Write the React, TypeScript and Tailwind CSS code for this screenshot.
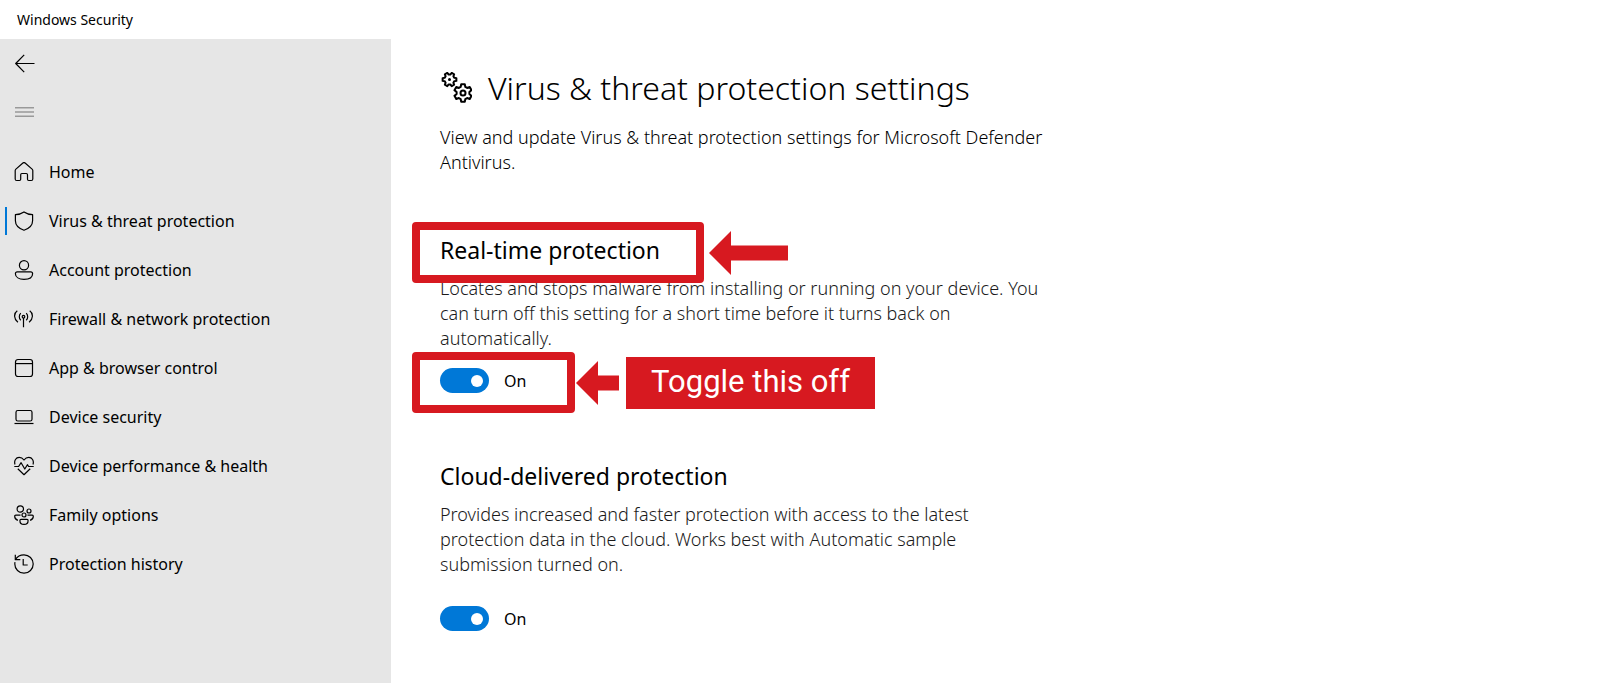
import { useState, type ReactNode } from "react"

const Icon = ({ children }: { children: ReactNode }) => (
    <svg className="size-5 shrink-0" viewBox="0 0 20 20" fill="none" stroke="currentColor" strokeWidth="1.2" strokeLinejoin="round" aria-hidden="true">
        {children}
    </svg>
)

const navItems = [
    {
        label: "Home",
        icon: <path d="M1.2 8.6c0-.6.2-1 .7-1.5l7-6.1c.7-.6 1.5-.6 2.2 0l7 6.1c.5.5.7.9.7 1.5v8.400c0 .9-.6 1.5-1.5 1.5h-2.600c-.7 0-1.2-.5-1.2-1.2v-4.600c0-.7-.5-1.2-1.2-1.2H7.900c-.7 0-1.2.5-1.2 1.2v4.600c0 .7-.5 1.2-1.2 1.2H2.700c-.9 0-1.5-.6-1.5-1.5z" />,
    },
    {
        label: "Virus & threat protection",
        icon: <path d="M10 .9c2.4 1.7 5.2 2.6 8.6 2.8v6.1c0 4.5-2.9 7.5-8.6 9.5-5.7-2-8.6-5-8.6-9.5V3.700C4.800 3.500 7.600 2.600 10 .9z" />,
    },
    {
        label: "Account protection",
        icon: (
            <>
                <circle cx="10" cy="5.3" r="4.6" />
                <path d="M3.3 11.8h13.4c1.1 0 1.9.8 1.9 1.9 0 3.6-3.6 5.6-8.6 5.6s-8.6-2-8.6-5.6c0-1.1.8-1.9 1.9-1.9z" />
            </>
        ),
    },
    {
        label: "Firewall & network protection",
        icon: (
            <>
                <circle cx="9.5" cy="7.7" r="1.3" />
                <path d="M9.5 9v9.2M6.8 11.3c-2-1.8-2-5.4 0-7.2M12.2 11.3c2-1.8 2-5.4 0-7.2M3.9 13.3c-4.3-3.6-4.3-8.9-.6-11.5M15.1 13.3c4.3-3.6 4.3-8.9.6-11.5" />
            </>
        ),
    },
    {
        label: "App & browser control",
        icon: (
            <>
                <rect x="1.5" y="1.5" width="17" height="17" rx="2.5" />
                <path d="M1.5 5.6h17" />
            </>
        ),
    },
    {
        label: "Device security",
        icon: (
            <>
                <rect x="2" y="3.5" width="16" height="10.5" rx="1.8" />
                <path d="M.5 16.5h19" />
            </>
        ),
    },
    {
        label: "Device performance & health",
        icon: (
            <>
                <path d="M1 8.5C-.2 4.6 2 1.4 5.2 1.4c2 0 3.5.9 4.8 2.6 1.3-1.7 2.8-2.6 4.8-2.6 3.2 0 5.4 3.2 4.2 7.1" />
                <path d="M.3 10.5h4.3l2.5-3.8 3.7 6.3 2.6-4.3 1.2 1.8h5.1M3.8 12.7l6.2 6 6.2-6" />
            </>
        ),
    },
    {
        label: "Family options",
        icon: (
            <>
                <circle cx="6.3" cy="4" r="3.2" />
                <circle cx="15" cy="6" r="2" />
                <circle cx="10" cy="10" r="2" />
                <path d="M6.5 10.2H1.8c-.7 0-1.1.4-1.1 1.1 0 2.1 1.2 3.5 3.2 4.1M13.5 10.2h4.7c.7 0 1.1.4 1.1 1.1 0 2.1-1.2 3.5-3.2 4.1M7 14.3h6c.7 0 1.1.4 1.1 1.1 0 2.4-1.6 4-4.1 4s-4.1-1.6-4.1-4c0-.7.4-1.1 1.1-1.1z" />
            </>
        ),
    },
    {
        label: "Protection history",
        icon: (
            <>
                <path d="M1.5 5.5C3.2 2.6 6.3.8 10 .8a9.2 9.2 0 1 1-9.2 9.2c0-.7.1-1.3.2-1.9" />
                <path d="M1.3.7v5h5M9.2 5v6h4.5" />
            </>
        ),
    },
]

// outline of a six-toothed gear around (cx, cy)
const gear = (cx: number, cy: number, r: number) => {
    const points: string[] = []
    for (let i = 0; i < 6; i++) {
        const mid = (i * Math.PI) / 3 - Math.PI / 2
        for (const [turn, size] of [[-0.36, 0.72], [-0.2, 1], [0.2, 1], [0.36, 0.72]]) {
            const x = cx + Math.cos(mid + turn) * r * size
            const y = cy + Math.sin(mid + turn) * r * size
            points.push(`${x.toFixed(2)} ${y.toFixed(2)}`)
        }
    }
    return `M${points.join("L")}Z`
}

const Gears = () => (
    <svg className="h-8 w-8 shrink-0" viewBox="0 0 32 32" fill="none" stroke="currentColor" strokeWidth="2" strokeLinejoin="round" aria-hidden="true">
        <g transform="rotate(30 9.5 7.5)">
            <path d={gear(9.5, 7.5, 7)} />
        </g>
        <circle cx="9.5" cy="7.5" r="1.5" fill="currentColor" stroke="none" />
        <path d={gear(23, 21, 9)} />
        <circle cx="23" cy="21" r="2.5" />
    </svg>
)

const Switch = ({ name }: { name: string }) => {
    const [on, setOn] = useState(true)
    return (
        <label className="flex w-fit items-center gap-[15px] text-base leading-6 text-black">
            <input
                type="checkbox"
                role="switch"
                aria-label={name}
                checked={on}
                onChange={() => setOn(!on)}
                className="flex h-[25px] w-[49px] appearance-none items-center rounded-full bg-gray-500 px-[6px] before:size-3 before:rounded-full before:bg-white checked:justify-end checked:bg-[#0078d7]"
            />
            {on ? "On" : "Off"}
        </label>
    )
}

const App = () => {
    return (
        <div className="flex min-h-screen flex-col bg-white font-['Noto_Sans','Open_Sans',sans-serif] text-black">
            <header className="flex h-[39px] items-center pl-[17px] pt-px text-sm">Windows Security</header>
            <div className="flex grow">
                <aside className="w-[391px] shrink-0 bg-[#e6e6e6]">
                    <button type="button" aria-label="Back" className="flex h-12 items-center pl-[15px]">
                        <Icon>
                            <path d="M.5 10.5h19M9.2 1.8L.7 10.5l8.500 8.700" />
                        </Icon>
                    </button>
                    <button type="button" aria-label="Menu" className="flex h-[49px] items-center pl-[15px] text-[#999]">
                        <Icon>
                            <path d="M0 5.8h19M0 10h19M0 14.2h19" strokeWidth="1.5" />
                        </Icon>
                    </button>
                    <nav className="mt-[11px]">
                        {navItems.map((item, i) => (
                            <a key={item.label} href="#" className="relative flex h-[49px] items-center gap-[15px] pl-[14px] text-base">
                                {i === 1 && <span className="absolute left-[5px] h-7 w-[2px] bg-[#0078d7]" />}
                                <Icon>{item.icon}</Icon>
                                {item.label}
                            </a>
                        ))}
                    </nav>
                </aside>

                <main className="min-w-0 grow pl-[49px] pt-[25px]">
                    <div className="flex items-center gap-4">
                        <Gears />
                        <h1 className="text-[32px] font-light leading-[48px]">Virus & threat protection settings</h1>
                    </div>
                    <p className="mt-[13px] max-w-[620px] text-lg font-light leading-[25px] text-black">
                        View and update Virus & threat protection settings for Microsoft Defender Antivirus.
                    </p>

                    <section className="mt-[59px]">
                        <div className="relative w-fit">
                            <h2 className="text-[23px] leading-8">Real-time protection</h2>
                            <div className="absolute -left-7 -top-3 flex items-center gap-[5px] text-[#d71920]">
                                <div className="h-[61px] w-[292px] rounded-[4px] border-8 border-current" />
                                <svg className="h-11 w-[79px]" viewBox="0 0 79 44" fill="currentColor" aria-hidden="true">
                                    <path d="M0 22L22 0v14.5h57v15H22V44z" />
                                </svg>
                            </div>
                        </div>
                        <p className="mt-[10px] max-w-[610px] text-lg font-light leading-[25px] text-[#1a1a1a]">
                            Locates and stops malware from installing or running on your device. You can turn off this setting for a short time before it turns back on automatically.
                        </p>
                        <div className="relative mt-[17px]">
                            <Switch name="Real-time protection" />
                            <div className="pointer-events-none absolute -left-7 -top-4 flex items-center text-[#d71920]">
                                <div className="h-[61px] w-[163px] rounded-[4px] border-8 border-current" />
                                <svg className="ml-px h-11 w-[43px]" viewBox="0 0 43 44" fill="currentColor" aria-hidden="true">
                                    <path d="M0 22L22 0v14.5h21v15H22V44z" />
                                </svg>
                                <div className="ml-[7px] flex h-[52px] w-[249px] items-center justify-center bg-[#d71920] font-[Roboto,sans-serif] text-[31px] text-white">
                                    Toggle this off
                                </div>
                            </div>
                        </div>
                    </section>

                    <section className="mt-[67px] pb-10">
                        <h2 className="text-[23px] leading-8">Cloud-delivered protection</h2>
                        <p className="mt-[10px] max-w-[560px] text-lg font-light leading-[25px] text-[#1a1a1a]">
                            Provides increased and faster protection with access to the latest protection data in the cloud. Works best with Automatic sample submission turned on.
                        </p>
                        <div className="mt-[29px]">
                            <Switch name="Cloud-delivered protection" />
                        </div>
                    </section>
                </main>
            </div>
        </div>
    )
}
export default App
